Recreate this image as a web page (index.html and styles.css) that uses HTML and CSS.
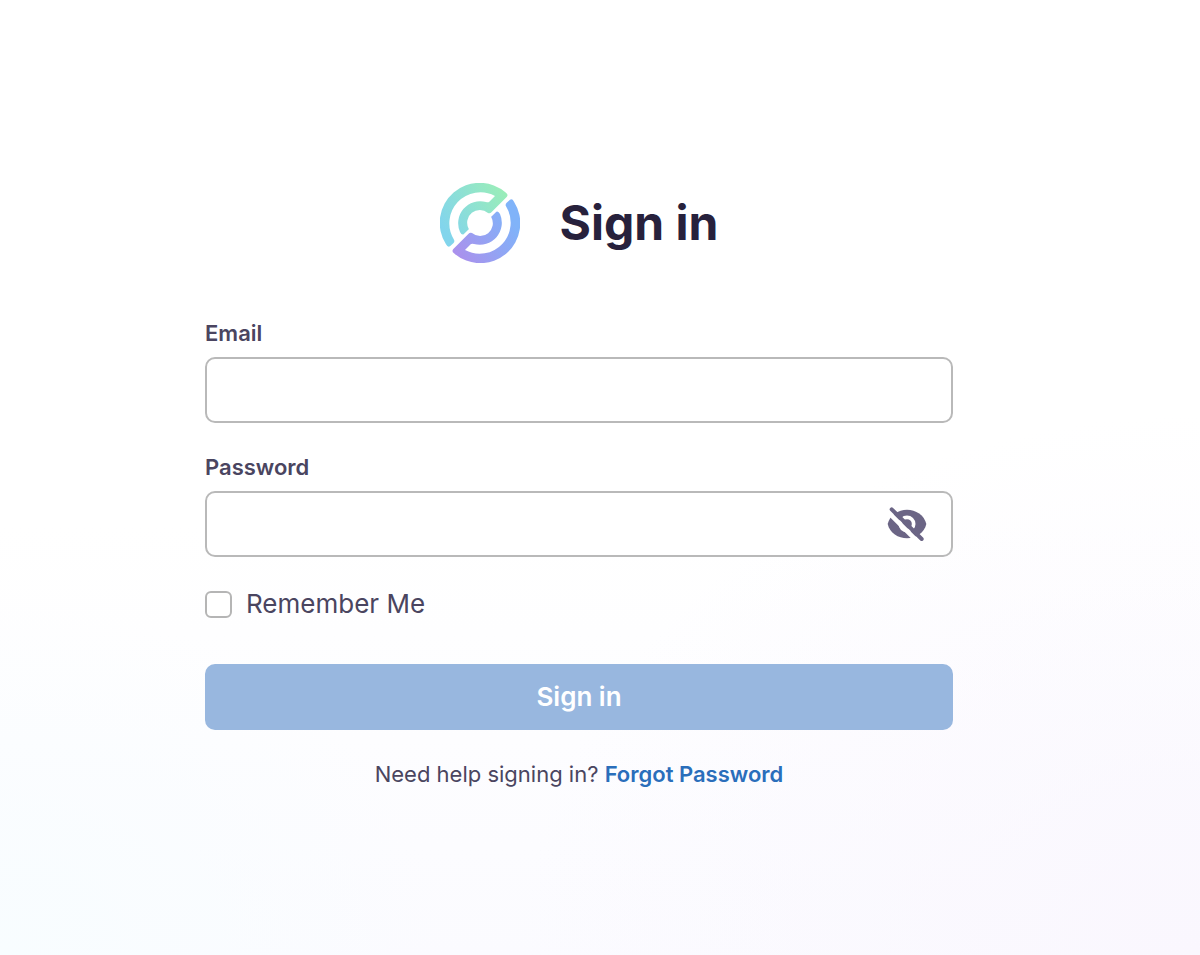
FILE: index.html
```
<!DOCTYPE html>
<html lang="en">
<head>
<meta charset="utf-8">
<meta name="viewport" content="width=device-width, initial-scale=1">
<title>Sign in</title>
<link rel="stylesheet" href="styles.css">
</head>
<body>
<main class="page">
  <form class="signin">
    <header class="brand">
      <svg class="logo" viewBox="-120 -120 240 240" aria-hidden="true">
        <defs>
          <linearGradient id="mint" gradientUnits="userSpaceOnUse" x1="-100" y1="30" x2="80" y2="-80">
            <stop offset="0" stop-color="#82d5ec"/>
            <stop offset="1" stop-color="#9aedb9"/>
          </linearGradient>
          <linearGradient id="violet" gradientUnits="userSpaceOnUse" x1="-80" y1="90" x2="90" y2="-20">
            <stop offset="0" stop-color="#ab90ec"/>
            <stop offset="1" stop-color="#80b3f9"/>
          </linearGradient>
        </defs>
        <path fill="url(#mint)" d="M-102 64A120 120 0 0 1 78-91Q86-85 80-78L35-33Q30-27 24-30A38 38 0 0 0-34 17L-33 18L-49 34Q-55 37-60 27A66 66 0 0 1 18-63Q25-61 28-64L45-81A93 93 0 0 0-78 50Q-75 56-80 61L-90 70Q-97 74-102 64Z"/>
        <path fill="url(#violet)" d="M102-64A120 120 0 0 1-78 91Q-86 85-80 78L-35 33Q-30 27-24 30A38 38 0 0 0 34-17L33-18L49-34Q55-37 60-27A66 66 0 0 1-18 63Q-25 61-28 64L-45 81A93 93 0 0 0 78-50Q75-56 80-61L90-70Q97-74 102-64Z"/>
      </svg>
      <h1 class="title">Sign in</h1>
    </header>

    <div class="field">
      <label class="label" for="email">Email</label>
      <input class="input" id="email" type="email" autocomplete="username">
    </div>

    <div class="field">
      <label class="label" for="password">Password</label>
      <div class="input input-group">
        <input class="bare-input" id="password" type="password" autocomplete="current-password">
        <button class="reveal" type="button" aria-label="Show password">
          <svg class="eye" viewBox="0 0 120 102" aria-hidden="true">
            <path fill="#6b6585" d="M2 51C8 24 34 8 60 8S112 24 118 51C112 78 86 94 60 94S8 78 2 51Z"/>
            <circle cx="60" cy="51" r="20" fill="none" stroke="#fff" stroke-width="11"/>
            <path d="M5 17L94 106" stroke="#fff" stroke-width="14"/>
            <path d="M14 7L104 96" stroke="#6b6585" stroke-width="12" stroke-linecap="round"/>
          </svg>
        </button>
      </div>
    </div>

    <label class="remember">
      <input class="checkbox" type="checkbox">
      <span>Remember Me</span>
    </label>

    <button class="submit" type="submit" disabled>Sign in</button>

    <p class="help">Need help signing in? <a class="link" href="#forgot">Forgot Password</a></p>
  </form>
</main>
</body>
</html>
```
FILE: styles.css
```
* {
  box-sizing: border-box;
}

body {
  margin: 0;
  font-family: Inter, "Liberation Sans", sans-serif;
  font-size: 22px;
  line-height: 28px;
  color: #4a4560;
}

.page {
  display: flex;
  justify-content: center;
  min-height: 100vh;
  padding: 183px 66px 60px 24px;
  background:
    radial-gradient(ellipse at 0% 100%, #f8fdff, transparent 26%),
    radial-gradient(ellipse at 100% 100%, #faf7fe, transparent 40%),
    linear-gradient(#fff 55%, #fbfbff);
}

.signin {
  display: flex;
  flex-direction: column;
  gap: 30px;
  width: 100%;
  max-width: 748px;
}

.brand {
  display: flex;
  align-items: center;
  justify-content: center;
  gap: 40px;
  margin-bottom: 26px;
}

.logo {
  width: 80px;
  height: 80px;
}

.title {
  margin: 0;
  font-size: 48px;
  line-height: 56px;
  font-weight: 700;
  color: #27213c;
}

.field {
  display: flex;
  flex-direction: column;
  gap: 10px;
}

.label {
  font-weight: 600;
}

.input {
  width: 100%;
  height: 66px;
  padding: 0 24px;
  border: 2px solid #b9b9b9;
  border-radius: 10px;
  background: #fff;
  font: inherit;
  color: inherit;
}

.input-group {
  display: flex;
  align-items: center;
}

.bare-input {
  flex: 1;
  min-width: 0;
  height: 100%;
  border: 0;
  outline: 0;
  background: none;
  font: inherit;
  color: inherit;
}

.reveal {
  display: flex;
  padding: 0;
  border: 0;
  background: none;
}

.eye {
  width: 40px;
  height: 34px;
}

.remember {
  display: flex;
  align-items: center;
  gap: 14px;
  font-size: 26px;
  line-height: 34px;
}

.checkbox {
  appearance: none;
  width: 27px;
  height: 27px;
  margin: 0;
  border: 2px solid #b5b5b5;
  border-radius: 6px;
  background: #fff;
}

.submit {
  height: 66px;
  margin-top: 13px;
  border: 0;
  border-radius: 10px;
  background: #98b7df;
  font: inherit;
  font-size: 26px;
  font-weight: 600;
  color: #fff;
}

.help {
  margin: 0;
  text-align: center;
}

.link {
  font-weight: 600;
  color: #2a6ebb;
  text-decoration: none;
}
```
